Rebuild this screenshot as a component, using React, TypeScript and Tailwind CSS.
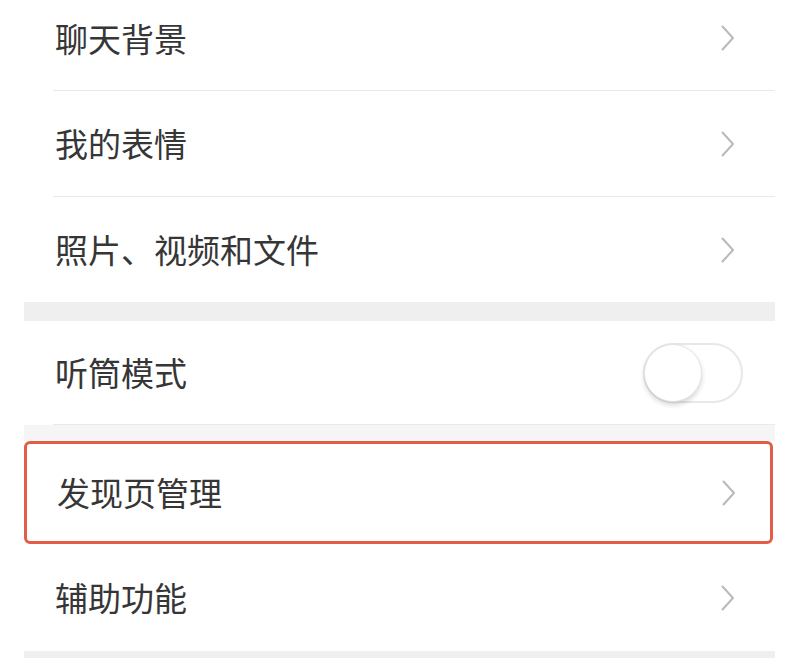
import React from "react";

const font = { fontFamily: '"Noto Sans CJK SC", "Noto Sans", sans-serif' };

function Chevron() {
    return (
        <svg width="14" height="26" viewBox="0 0 14 26" fill="none">
            <polyline points="1.5,1.5 12,13 1.5,24.5" stroke="#b9b9b9" strokeWidth="2" strokeLinecap="round" strokeLinejoin="round" />
        </svg>
    );
}

function Toggle() {
    return (
        <div className="relative w-[100px] h-[60px] rounded-full border-2 border-[#e8e8e8] bg-white">
            <div className="absolute left-[-1px] top-[-1px] w-[58px] h-[58px] rounded-full bg-white border border-[#e4e4e4] shadow-[0_3px_5px_rgba(0,0,0,0.16)]" />
        </div>
    );
}

type RowProps = {
    label: string;
    border?: boolean;
    right?: React.ReactNode;
    className?: string;
};

function Row({ label, border = true, right, className = "h-[105px]" }: RowProps) {
    return (
        <div className={`pl-[29px] bg-white ${className}`}>
            <div className={`h-full flex items-center justify-between ${border ? "border-b border-[#e9e9e9]" : ""}`}>
                <span className="pl-[2px] text-[33px] text-[#363636] leading-none">{label}</span>
                {right ?? (
                    <div className="pr-[40px] flex items-center">
                        <Chevron />
                    </div>
                )}
            </div>
        </div>
    );
}

export default function App() {
    return (
        <div className="w-[808px] h-[658px] overflow-hidden bg-white" style={font}>
            <div className="ml-[24px] w-[751px] -mt-[14px]">
                <Row label="聊天背景" />
                <Row label="我的表情" className="h-[106px]" />
                <Row label="照片、视频和文件" border={false} className="h-[105px]" />

                <div className="h-[19px] bg-[#efefef]" />

                <Row
                    label="听筒模式"
                    className="h-[104px]"
                    right={
                        <div className="pr-[32px] flex items-center">
                            <Toggle />
                        </div>
                    }
                />

                <div className="h-[16px] bg-[#f5f5f5]" />

                <div className="h-[103px] mr-[2px] rounded-[6px] border-[3px] border-[#e25c4a] bg-white flex items-center justify-between pl-[30px] pr-[34px]">
                    <span className="text-[33px] text-[#363636] leading-none">发现页管理</span>
                    <Chevron />
                </div>

                <Row label="辅助功能" border={false} className="h-[107px]" />

                <div className="h-[8px] bg-[#efefef]" />
            </div>
        </div>
    );
}
